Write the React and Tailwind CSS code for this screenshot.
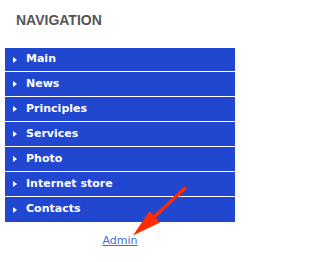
const items = ['Main', 'News', 'Principles', 'Services', 'Photo', 'Internet store', 'Contacts'];

export default function App() {
  return (
    <div className="relative w-[251px] h-[262px] bg-white pl-[5px] pt-[12px]">
      {/* heading */}
      <h2 className="ml-[11px] text-[14px] leading-[16px] font-bold text-[#555555] font-['Liberation_Sans',Arial,sans-serif]">
        NAVIGATION
      </h2>

      {/* menu */}
      <ul className="mt-[20px] w-[230px] bg-[#2146cf] divide-y divide-white font-['DejaVu_Sans',Verdana,sans-serif]">
        {items.map((item) => (
          <li key={item} className="h-[25px] first:h-[24px] flex items-center pl-[8px] text-white text-[11px] font-bold">
            <span className="w-0 h-0 border-y-[3px] border-y-transparent border-l-[4px] border-l-white mr-[9px]" />
            {item}
          </li>
        ))}
      </ul>

      <div className="w-[230px] mt-[12px] text-center leading-[14px] font-['DejaVu_Sans',Verdana,sans-serif] text-[11px]">
        <a href="#" className="text-[#3b6fd6] underline">Admin</a>
      </div>

      {/* red pointer arrow */}
      <svg className="absolute left-0 top-0 pointer-events-none" width="251" height="262">
        <line x1="185" y1="188" x2="152" y2="219" stroke="#ff2a00" strokeWidth="3.5" strokeLinecap="round" />
        <polygon points="133,235.5 149.5,211 160,222.5" fill="#ff2a00" />
      </svg>
    </div>
  );
}
